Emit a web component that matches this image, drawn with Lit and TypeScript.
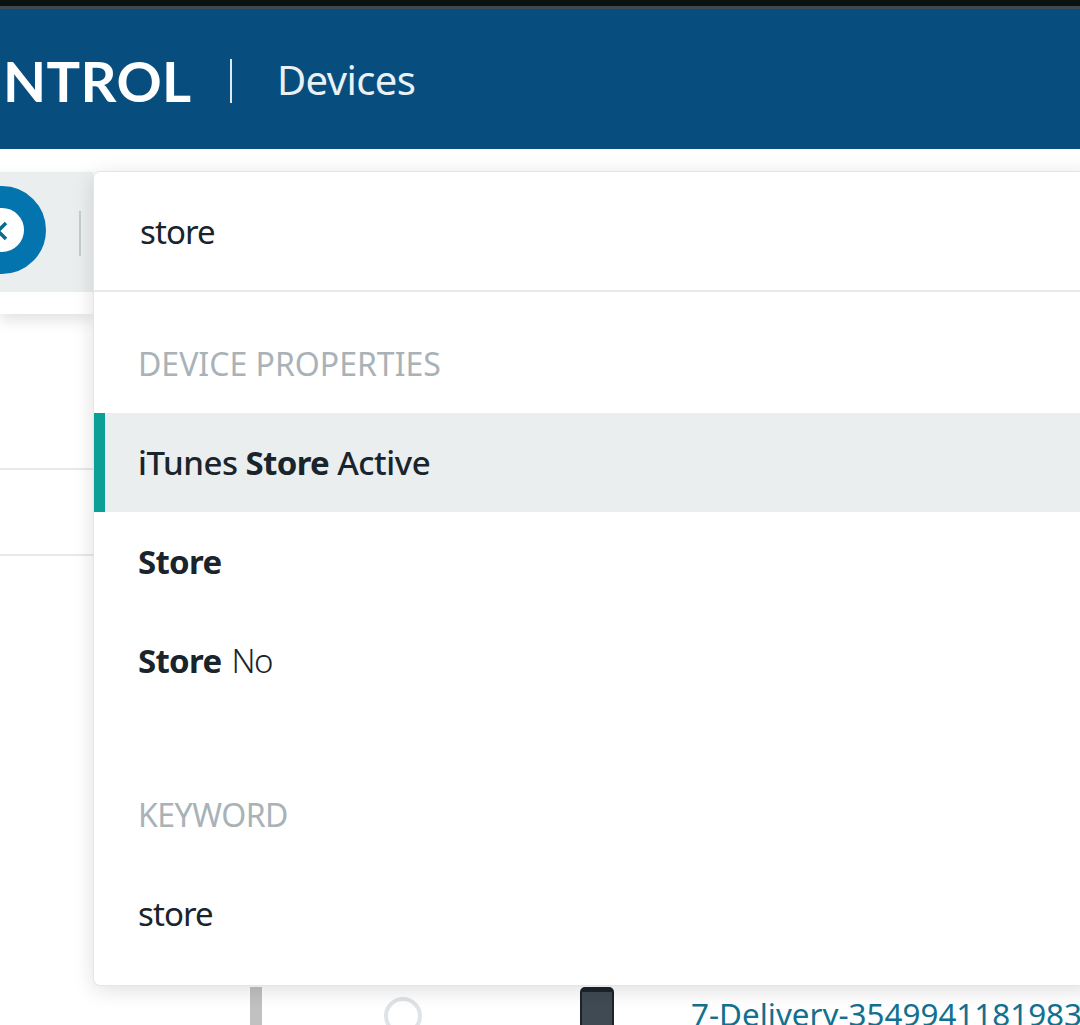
import { LitElement, html, css } from "lit";
import { customElement } from "lit/decorators.js";

@customElement("app-root")
export class AppRoot extends LitElement {
  static styles = css`
    :host { display: block; width: 1080px; height: 1025px; overflow: hidden; position: relative; background: #fff; font-family: "Noto Sans", "Open Sans", sans-serif; color: #19242c; }
    .topbar { height: 6px; background: #0c1210; border-bottom: 3px solid #3c4a50; }
    .header { height: 140px; background: #074e7f; display: flex; align-items: center; color: #fff; }
    .logo { font-family: "Lato", sans-serif; font-weight: 700; font-size: 56px; letter-spacing: 0.4px; padding-left: 3px; width: 230px; box-sizing: border-box; line-height: 1; margin-top: 4px; }
    .sep { width: 2px; height: 44px; background: #dfe9ef; margin-top: 4px; }
    .title { font-size: 40px; margin-left: 45px; font-weight: 400; letter-spacing: -0.6px; color: #e8f1f6; line-height: 1; margin-top: 2px; }
    .page { position: relative; height: 876px; background: #fff; padding-top: 23px; box-sizing: border-box; }
    .toolwrap { height: 142px; width: 93px; box-shadow: 0 6px 14px rgba(0,0,0,.12); background: #fff; }
    .toolbar { height: 120px; background: #ebeeef; position: relative; }
    .circle { position: absolute; left: -42px; top: 14px; width: 44px; height: 44px; border: 22px solid #0474ae; border-radius: 50%; background: #fff; display: flex; align-items: center; justify-content: center; }
    .circle svg { margin: 2px 8px 0 0; flex: none; }
    .vr { position: absolute; left: 79px; top: 39px; width: 2px; height: 45px; background: #c6cbce; }
    .rule { height: 2px; background: #e6e8e9; width: 93px; }
    .rule.a { margin-top: 154px; }
    .rule.b { margin-top: 84px; }
    .bottom { position: absolute; top: 838px; left: 0; right: 0; height: 38px; }
    .bar { position: absolute; left: 250px; top: 0; width: 12px; height: 38px; background: #bfc1c2; }
    .radio { position: absolute; left: 384px; top: 10px; width: 30px; height: 30px; border: 4px solid #dfe3e5; border-radius: 50%; }
    .phone { position: absolute; left: 580px; top: 0; width: 30px; height: 38px; background: #3f4a52; border: 2px solid #1b242b; border-top-width: 5px; border-radius: 5px 5px 0 0; }
    .link { position: absolute; left: 691px; top: 8px; font-size: 31.4px; color: #13708f; white-space: nowrap; line-height: 1.2; }
    .drop { position: absolute; left: 94px; top: 23px; width: 1000px; height: 813px; background: #fff; border-radius: 6px; box-shadow: 0 0 0 1px #e3e5e6, 0 4px 22px rgba(0,0,0,.14); display: flex; flex-direction: column; }
    .search { height: 118px; border-bottom: 2px solid #e6e8e9; display: flex; align-items: center; padding-left: 46px; font-size: 33px; letter-spacing: -.9px; flex: none; }
    .head { font-size: 32px; color: #a9b2b7; height: 48px; line-height: 48px; padding-left: 44px; flex: none; }
    .h1 { margin-top: 48px; margin-bottom: 25px; }
    .h2 { margin-top: 81px; margin-bottom: 39px; letter-spacing: -.5px; }
    .row { height: 99px; display: flex; align-items: center; padding-left: 44px; font-size: 33px; letter-spacing: -.5px; white-space: pre; flex: none; }
    .row b { font-weight: 700; letter-spacing: -.7px; }
    .row .thin { letter-spacing: -1.5px; font-weight: 300; margin-left: 2px; }
    .row.active { background: #ebeeef; border-left: 11px solid #0aa097; padding-left: 33px; font-weight: 500; letter-spacing: -.45px; }
    .kw { height: 70px; letter-spacing: -.9px; padding-left: 44px; }
  `;

  render() {
    return html`
      <div class="topbar"></div>
      <div class="header">
        <div class="logo">NTROL</div>
        <div class="sep"></div>
        <div class="title">Devices</div>
      </div>
      <div class="page">
        <div class="toolwrap">
          <div class="toolbar">
            <div class="circle">
              <svg width="24" height="24" viewBox="0 0 24 24" fill="none" stroke="#0a6a90" stroke-width="3.5"><path d="M4 4l16 16M20 4L4 20"/></svg>
            </div>
            <div class="vr"></div>
          </div>
        </div>
        <div class="rule a"></div>
        <div class="rule b"></div>
        <div class="bottom">
          <div class="bar"></div>
          <div class="radio"></div>
          <div class="phone"></div>
          <div class="link">7-Delivery-3549941181983</div>
        </div>
        <div class="drop">
          <div class="search">store</div>
          <div class="head h1">DEVICE PROPERTIES</div>
          <div class="row active"><span>iTunes <b>Store</b> Active</span></div>
          <div class="row"><span><b>Store</b></span></div>
          <div class="row"><span><b>Store</b> <span class="thin">No</span></span></div>
          <div class="head h2">KEYWORD</div>
          <div class="row kw">store</div>
        </div>
      </div>
    `;
  }
}
